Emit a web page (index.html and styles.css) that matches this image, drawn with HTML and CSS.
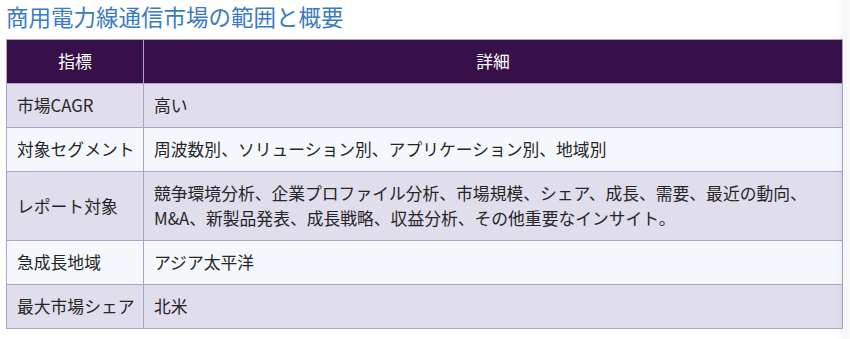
FILE: index.html
```html
<!DOCTYPE html>
<html lang="ja">
<head>
<meta charset="utf-8">
<title>商用電力線通信市場の範囲と概要</title>
<link rel="stylesheet" href="styles.css">
</head>
<body>
<div class="page">
  <h2 class="title">商用電力線通信市場の範囲と概要</h2>
  <table class="scope">
    <colgroup>
      <col class="col-key">
      <col class="col-val">
    </colgroup>
    <thead>
      <tr><th>指標</th><th>詳細</th></tr>
    </thead>
    <tbody>
      <tr class="odd"><td class="key">市場CAGR</td><td>高い</td></tr>
      <tr class="even"><td class="key">対象セグメント</td><td>周波数別、ソリューション別、アプリケーション別、地域別</td></tr>
      <tr class="odd"><td class="key">レポート対象</td><td>競争環境分析、企業プロファイル分析、市場規模、シェア、成長、需要、最近の動向、M&amp;A、新製品発表、成長戦略、収益分析、その他重要なインサイト。</td></tr>
      <tr class="even"><td class="key">急成長地域</td><td>アジア太平洋</td></tr>
      <tr class="odd"><td class="key">最大市場シェア</td><td>北米</td></tr>
    </tbody>
  </table>
</div>
</body>
</html>
```

FILE: styles.css
```css
html, body {
  margin: 0;
  padding: 0;
  background: #ffffff;
}

body {
  font-family: "Noto Sans CJK JP", "Noto Sans", sans-serif;
  color: #262626;
}

body::after {
  content: "";
  position: fixed;
  top: 0;
  right: 0;
  width: 16px;
  height: 100%;
  pointer-events: none;
  background: linear-gradient(to right, rgba(0, 0, 0, 0) 0%, rgba(0, 0, 0, 0.035) 70%, rgba(0, 0, 0, 0.02) 100%);
}

.page {
  padding: 0 7px 0 6px;
}

.title {
  margin: 0 0 7px 0;
  font-size: 22.5px;
  line-height: 32px;
  font-weight: 400;
  color: #3b7bbf;
}

.scope {
  width: 100%;
  border-collapse: collapse;
  table-layout: fixed;
  font-size: 16.8px;
  line-height: 25px;
}

.col-key {
  width: 137px;
}

.scope th,
.scope td {
  border: 1px solid #aba3c4;
  padding: 9px 10px;
  text-align: left;
  vertical-align: middle;
  font-weight: 400;
}

.scope td.key {
  padding-right: 6px;
  white-space: nowrap;
}

.scope th {
  background: #37104a;
  color: #ffffff;
  text-align: center;
}

.scope .odd td {
  background: #e0ddec;
}

.scope .even td {
  background: #f4f8fc;
}
```
